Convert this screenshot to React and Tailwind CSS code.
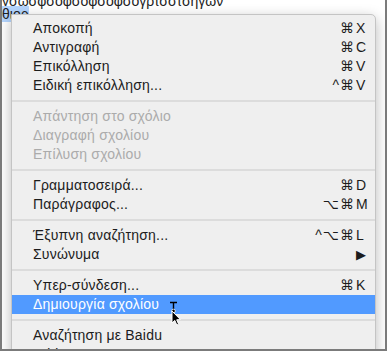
import React from 'react';

const items = [
  { label: 'Αποκοπή', mod: '⌘', key: 'X' },
  { label: 'Αντιγραφή', mod: '⌘', key: 'C' },
  { label: 'Επικόλληση', mod: '⌘', key: 'V' },
  { label: 'Ειδική επικόλληση...', mod: '^⌘', key: 'V' },
  { sep: true },
  { label: 'Απάντηση στο σχόλιο', disabled: true },
  { label: 'Διαγραφή σχολίου', disabled: true },
  { label: 'Επίλυση σχολίου', disabled: true },
  { sep: true },
  { label: 'Γραμματοσειρά...', mod: '⌘', key: 'D' },
  { label: 'Παράγραφος...', mod: '⌥⌘', key: 'M' },
  { sep: true },
  { label: 'Έξυπνη αναζήτηση...', mod: '^⌥⌘', key: 'L' },
  { label: 'Συνώνυμα', submenu: true },
  { sep: true },
  { label: 'Υπερ-σύνδεση...', mod: '⌘', key: 'K' },
  { label: 'Δημιουργία σχολίου', active: true },
  { sep: true },
  { label: 'Αναζήτηση με Baidu' },
  { label: 'Add to Evernote...' },
];

const MenuRow = ({ item }) => {
  if (item.sep) {
    return (
      <div className="h-[12px] flex items-center">
        <div className="h-[2px] w-full bg-[#dcdcdc]" />
      </div>
    );
  }
  const color = item.active ? 'bg-[#519aff] text-white' : item.disabled ? 'text-[#ababab]' : 'text-[#1c1c1c]';
  return (
    <div className={`h-[19px] flex items-center pl-[21px] ${color}`}>
      <span className="flex-1 whitespace-nowrap tracking-[0.2px]">{item.label}</span>
      <span className="text-right whitespace-nowrap tracking-[1px]">{item.mod}</span>
      <span className="w-[20px] pl-[1px] whitespace-nowrap">
        {item.key}
        {item.submenu && <span className="text-[13px] leading-none">▶</span>}
      </span>
    </div>
  );
};

const Cursor = () => (
  <svg className="absolute left-[164px] top-[299px]" width="18" height="28" viewBox="0 0 18 28">
    <path d="M4 3.5h7M7.5 3.5v8" stroke="#000" strokeWidth="1.4" fill="none" />
    <circle cx="7.5" cy="12" r="1.8" fill="#000" stroke="#fff" strokeWidth="0.8" />
    <path d="M6 12 L6 24 L8.8 21.4 L10.8 26 L12.6 25.2 L10.7 20.8 L14.4 20.6 Z" fill="#000" stroke="#fff" strokeWidth="1" strokeLinejoin="round" />
  </svg>
);

export default function App() {
  return (
    <div
      className="w-[387px] h-[351px] bg-white border-l-2 border-r-2 border-b-2 border-[#7b7b7b] relative overflow-hidden"
      style={{ fontFamily: '"Liberation Sans", "DejaVu Sans", sans-serif' }}
    >
      <div className="-mt-[5px] text-[14px] leading-[13px] text-[#222]">
        <div className="whitespace-nowrap">γσωσφσοφσοφσοφσογρτσστσηγων</div>
        <div>
          <span className="bg-[#b4d5fe]">θιορ</span>
        </div>
      </div>

      <div className="absolute left-[9px] top-[14px] w-[365px] bg-[#efefef] border border-[#c4c4c4] rounded-tr-[5px] shadow-[0_4px_14px_rgba(0,0,0,0.28)] pt-[4px] text-[14px]">
        {items.map((item, i) => (
          <MenuRow key={i} item={item} />
        ))}
      </div>

      <Cursor />
    </div>
  );
}
